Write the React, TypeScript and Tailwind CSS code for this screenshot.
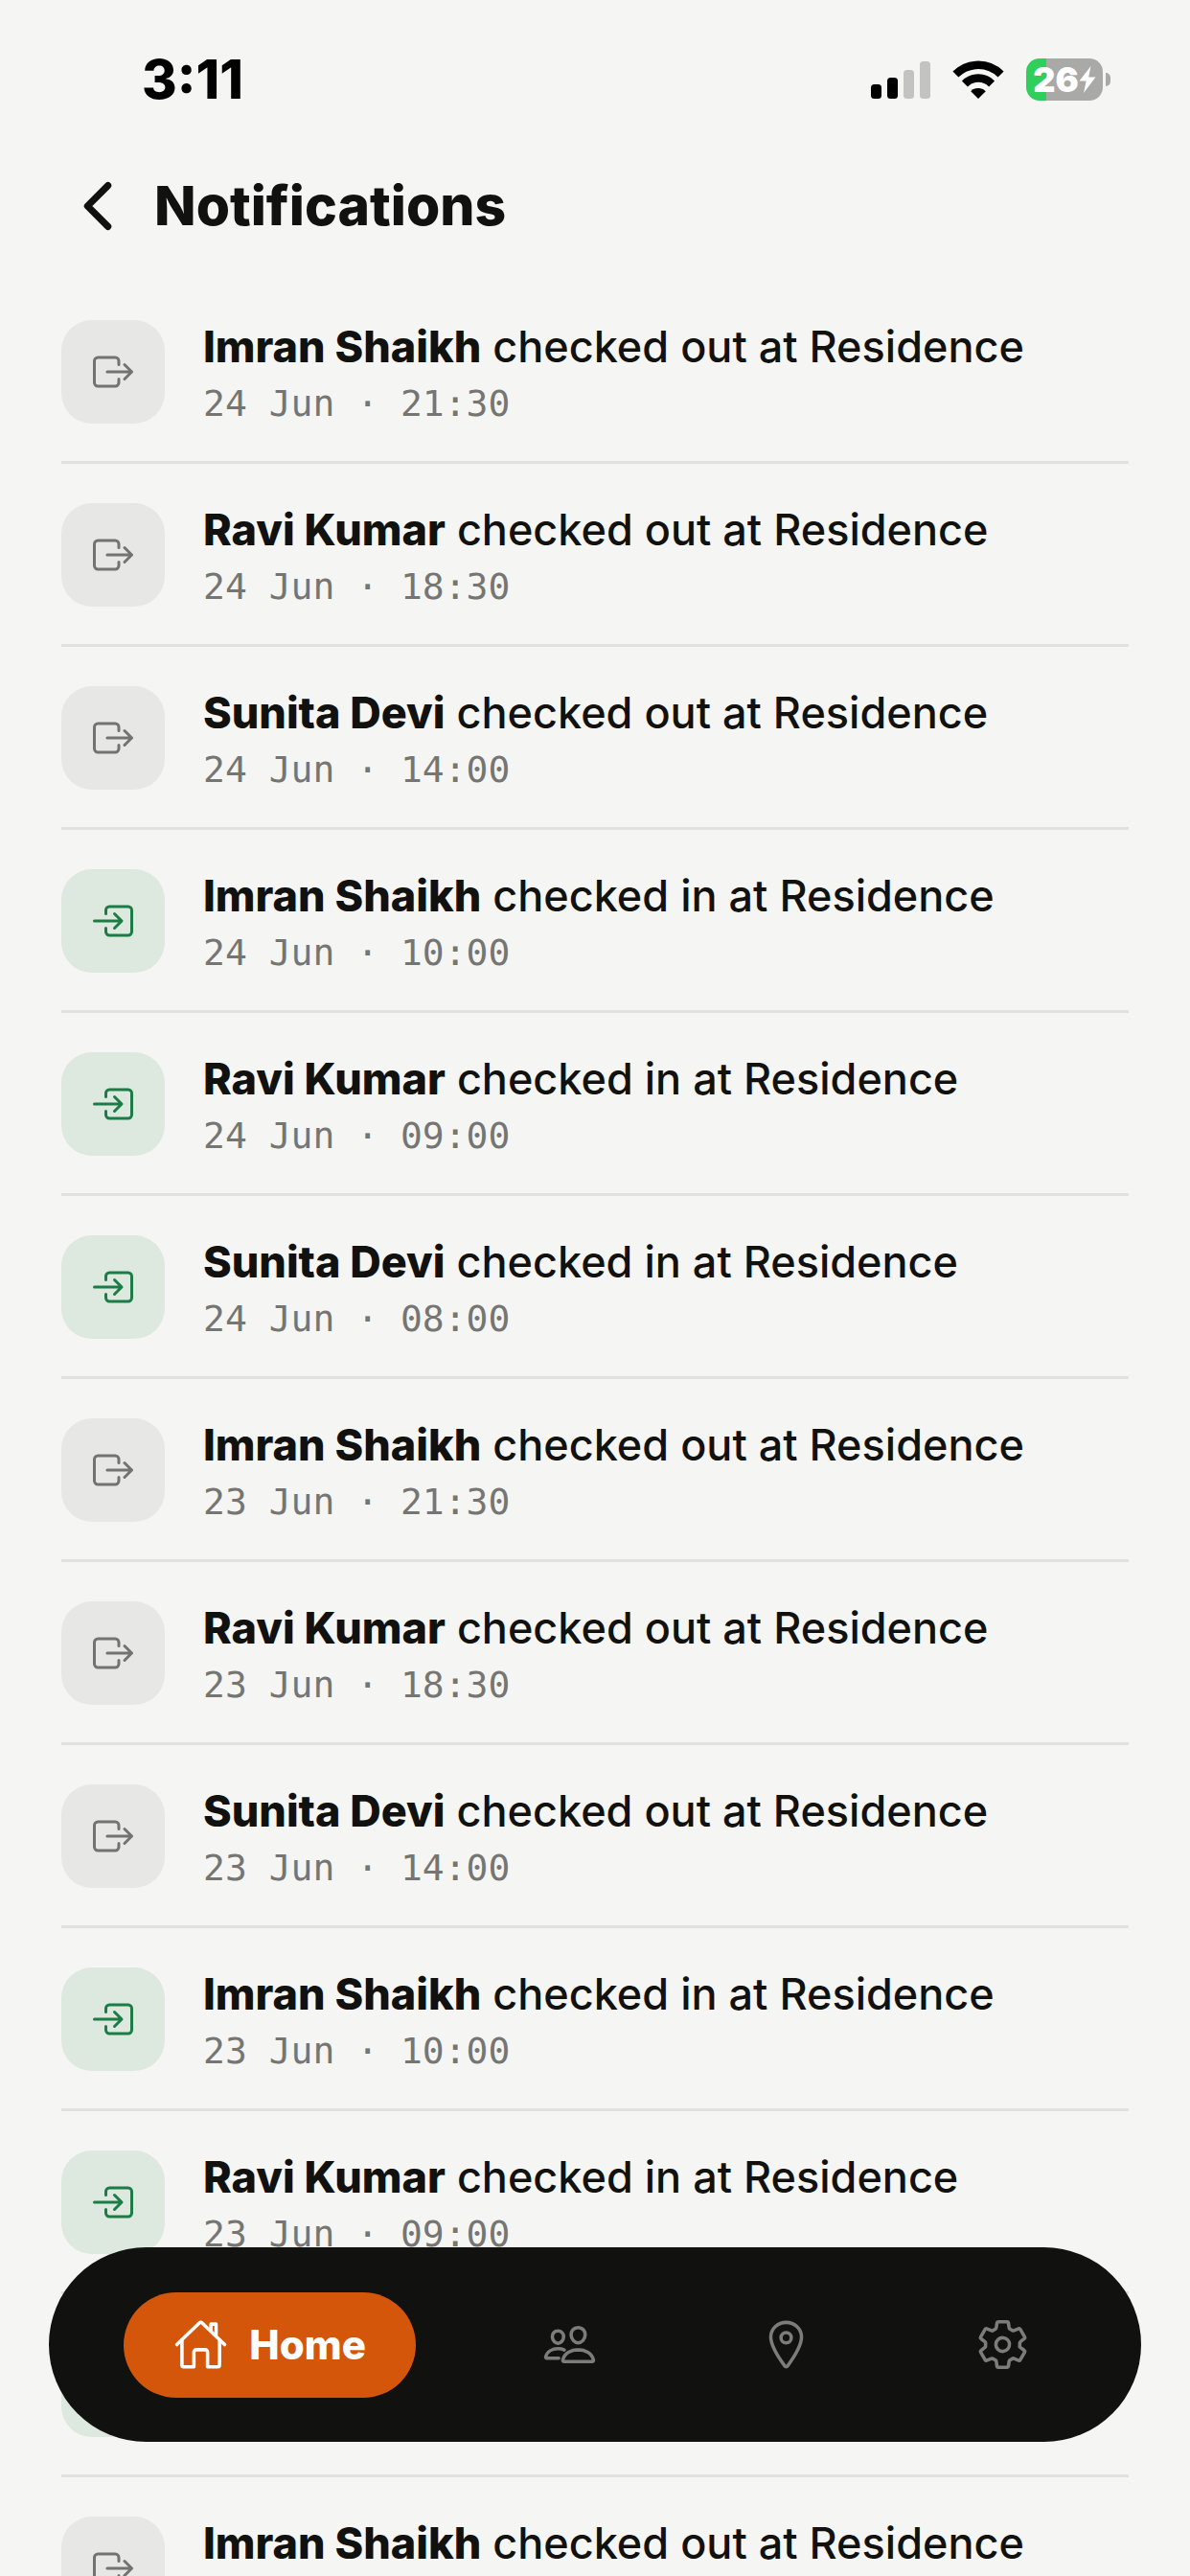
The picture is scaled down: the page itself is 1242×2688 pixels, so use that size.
import {
  IoChevronBack,
  IoEnterOutline,
  IoExitOutline,
  IoHomeOutline,
  IoLocationOutline,
  IoPeopleOutline,
  IoSettingsOutline,
} from "react-icons/io5";

interface Activity {
  name: string;
  type: "in" | "out";
  site: string;
  date: string;
  time: string;
}

const PAGE_SIZE = 13;

const DAYS = ["24 Jun", "23 Jun", "22 Jun"];

const DAILY_LOG: Omit<Activity, "date">[] = [
  { name: "Imran Shaikh", type: "out", site: "Residence", time: "21:30" },
  { name: "Ravi Kumar", type: "out", site: "Residence", time: "18:30" },
  { name: "Sunita Devi", type: "out", site: "Residence", time: "14:00" },
  { name: "Imran Shaikh", type: "in", site: "Residence", time: "10:00" },
  { name: "Ravi Kumar", type: "in", site: "Residence", time: "09:00" },
  { name: "Sunita Devi", type: "in", site: "Residence", time: "08:00" },
];

const activities: Activity[] = DAYS.flatMap((date) =>
  DAILY_LOG.map((entry) => ({ ...entry, date })),
).slice(0, PAGE_SIZE);

const SignalIcon = () => (
  <svg viewBox="0 0 62 40" className="w-[62px] h-10" aria-hidden="true">
    <rect x="0" y="25" width="11" height="15" rx="3.5" fill="#000" />
    <rect x="17" y="18" width="11" height="22" rx="3.5" fill="#000" />
    <rect x="34" y="10" width="11" height="30" rx="3.5" fill="#c3c3c2" />
    <rect x="51" y="1" width="11" height="39" rx="3.5" fill="#c3c3c2" />
  </svg>
);

const WifiIcon = () => (
  <svg viewBox="0 0 54 40" className="w-[54px] h-10" aria-hidden="true">
    <g fill="none" stroke="#000" strokeWidth="8.5">
      <path d="M3.4 14.6a33.4 33.4 0 0 1 47.2 0" />
      <path d="M12.9 24.4a20 20 0 0 1 28.2 0" />
    </g>
    <path d="M27 40l-7.8-7.8a11 11 0 0 1 15.6 0z" fill="#000" />
  </svg>
);

const Battery = () => (
  <div className="flex items-center gap-[3px]">
    <div className="flex h-11 w-20 items-center justify-center rounded-[14px] bg-linear-to-r from-[#30cf5b] from-26% to-[#a9a9a8] to-26%">
      <span className="text-[36px] leading-none font-black text-white">26</span>
      <svg viewBox="0 0 18 28" className="h-7 w-[18px]" fill="#fff" aria-hidden="true">
        <path d="M12.5 0L0.5 15.5h7.2L5 28 17.5 11.5h-7.3z" />
      </svg>
    </div>
    <div className="h-3.5 w-[5px] rounded-r-full bg-[#a9a9a8]" />
  </div>
);

const StatusBar = () => (
  <div className="flex h-[166px] shrink-0 items-center justify-between pr-[83px] pl-[148px]">
    <span className="text-[56px] leading-none font-extrabold text-black">3:11</span>
    <div className="flex items-center gap-[23px]">
      <SignalIcon />
      <WifiIcon />
      <Battery />
    </div>
  </div>
);

const ActivityRow = ({ activity }: { activity: Activity }) => {
  const isIn = activity.type === "in";

  return (
    <li className="flex items-center gap-10 border-b-[3px] border-[#e1e1dd] pt-[37px] pb-[35px]">
      <div
        className={`flex size-[108px] shrink-0 items-center justify-center rounded-[32px] ${
          isIn ? "bg-[#dde8df] text-[#1b7d45]" : "bg-[#e7e7e5] text-[#737371]"
        }`}
      >
        {isIn ? <IoEnterOutline className="size-12" /> : <IoExitOutline className="size-12" />}
      </div>
      <div className="flex flex-col gap-1 pt-0.5">
        <p className="text-[45px] leading-[60px] font-medium text-[#11110f]">
          <strong className="font-extrabold">{activity.name}</strong> checked {activity.type} at{" "}
          {activity.site}
        </p>
        <p className="font-['DejaVu_Sans_Mono',monospace] text-[38px] leading-[50px] text-[#757573]">
          {activity.date} · {activity.time}
        </p>
      </div>
    </li>
  );
};

const TabBar = () => (
  <nav className="fixed inset-x-[51px] bottom-[140px] grid h-[203px] grid-cols-[30fr_17fr_17fr_17fr] place-items-center rounded-full bg-[#11120f] px-[31px] text-[#7c7c7a]">
    <button
      type="button"
      className="flex h-[110px] items-center gap-[22px] rounded-full bg-[#d4560b] px-[52px] text-white"
    >
      <IoHomeOutline className="size-[57px]" />
      <span className="text-[42px] leading-none font-extrabold">Home</span>
    </button>
    <button type="button" aria-label="People">
      <IoPeopleOutline className="size-[57px]" />
    </button>
    <button type="button" aria-label="Locations">
      <IoLocationOutline className="size-[57px]" />
    </button>
    <button type="button" aria-label="Settings">
      <IoSettingsOutline className="size-[57px]" />
    </button>
  </nav>
);

export default function App() {
  return (
    <div className="flex h-screen flex-col bg-[#f5f5f3] font-['Inter',sans-serif]">
      <StatusBar />
      <header className="flex h-[127px] shrink-0 items-start gap-[21px] px-16 pt-[11px]">
        <button type="button" aria-label="Back" className="text-[#11110f]">
          <IoChevronBack className="size-[76px]" />
        </button>
        <h1 className="text-[57px] leading-[76px] font-extrabold text-[#11110f]">Notifications</h1>
      </header>
      <main className="min-h-0 flex-1 overflow-y-auto px-16 [scrollbar-width:none]">
        <ul>
          {activities.map((activity) => (
            <ActivityRow
              key={`${activity.name}-${activity.date}-${activity.time}`}
              activity={activity}
            />
          ))}
        </ul>
      </main>
      <TabBar />
    </div>
  );
}
